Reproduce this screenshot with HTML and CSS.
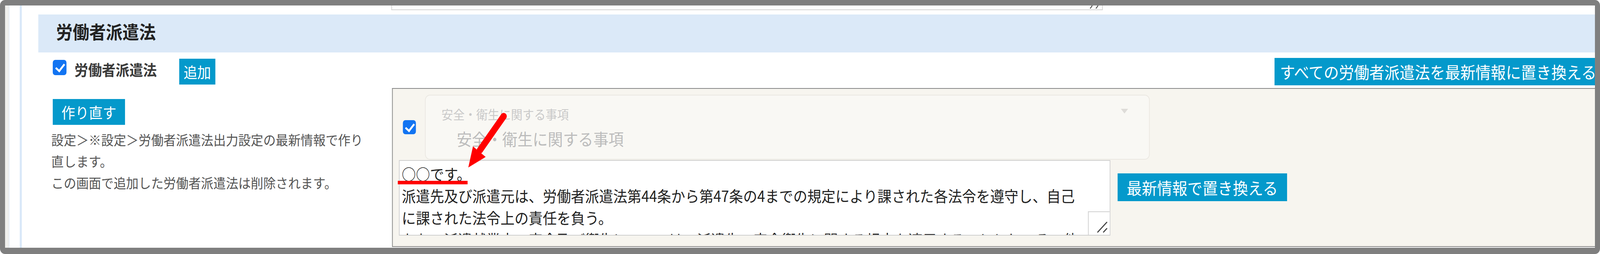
FILE: index.html
```html
<!DOCTYPE html>
<html lang="ja">
<head>
<meta charset="utf-8">
<title>労働者派遣法</title>
<link rel="stylesheet" href="styles.css">
</head>
<body>
<div class="page">
  <div class="frame">
    <div class="gutter"></div>
    <main class="main">
      <div class="prev-strip">
        <div class="prev-textarea">
          <svg class="grip" viewBox="0 0 30 8" aria-hidden="true">
            <line x1="3" y1="8" x2="9" y2="0" stroke="#555" stroke-width="2.5"/>
            <line x1="19" y1="8" x2="25" y2="0" stroke="#555" stroke-width="2.5"/>
          </svg>
        </div>
      </div>
      <section class="section">
        <h2 class="section-title">労働者派遣法</h2>
        <div class="row-top">
          <label class="check-label">
            <input type="checkbox" class="check" checked>
            <span class="check-text">労働者派遣法</span>
          </label>
          <button class="btn btn-add" type="button">追加</button>
          <div class="all-wrap">
            <button class="btn btn-all" type="button">すべての労働者派遣法を最新情報に置き換える</button>
          </div>
        </div>
        <div class="row-main">
          <div class="left-col">
            <button class="btn btn-rebuild" type="button">作り直す</button>
            <p class="note">設定＞※設定＞労働者派遣法出力設定の最新情報で作り直します。<br>この画面で追加した労働者派遣法は削除されます。</p>
          </div>
          <div class="panel">
            <div class="panel-row">
              <input type="checkbox" class="check check-item" checked>
              <div class="select">
                <div class="select-text">
                  <span class="select-label">安全・衛生に関する事項</span>
                  <span class="select-value">安全・衛生に関する事項</span>
                </div>
                <span class="select-arrow"></span>
              </div>
            </div>
            <div class="panel-row2">
              <div class="textarea">
                <div class="ta-line">○○です。</div>
                <div class="ta-line">派遣先及び派遣元は、労働者派遣法第44条から第47条の4までの規定により課された各法令を遵守し、自己に課された法令上の責任を負う。</div>
                <div class="ta-line">なお、派遣就業中の安全及び衛生については、派遣先の安全衛生に関する規定を適用することとし、その他については派遣元の安全衛生に関する規定を適用する。</div>
                <div class="corner">
                  <svg viewBox="0 0 58 58" aria-hidden="true">
                    <line x1="25" y1="51" x2="50" y2="26" stroke="#444" stroke-width="3" stroke-linecap="round"/>
                    <line x1="41" y1="51" x2="50" y2="42" stroke="#444" stroke-width="3" stroke-linecap="round"/>
                  </svg>
                </div>
              </div>
              <button class="btn btn-replace" type="button">最新情報で置き換える</button>
            </div>
          </div>
        </div>
      </section>
    </main>
  </div>
  <svg class="annot" viewBox="0 0 4428 649" aria-hidden="true">
    <rect x="1101" y="462" width="193" height="9" fill="#ff0000"/>
    <line x1="1394" y1="297" x2="1328" y2="384" stroke="#ff0000" stroke-width="17" stroke-linecap="round"/>
    <polygon points="1309,374 1344,401 1296,428" fill="#ff0000"/>
  </svg>
</div>
</body>
</html>
```

FILE: styles.css
```css
* { box-sizing: border-box; }
html, body { margin: 0; padding: 0; }
body {
  position: relative;
  overflow: hidden;
  height: 649px;
  background: #fff;
  font-family: "Noto Sans CJK JP", "Noto Sans", sans-serif;
}

.page {
  position: relative;
  width: 4428px;
  height: 649px;
  transform-origin: 0 0;
}
@media (max-width: 4427px) {
  .page { transform: scaleX(0.92502); }
}

.frame {
  width: 4428px;
  height: 649px;
  border: 14px solid #7f7f7f;
  border-bottom-width: 16px;
  border-radius: 14px;
  display: flex;
  overflow: hidden;
  background: #fff;
}

.gutter {
  flex: 0 0 46px;
  background: #fff;
  border-left: 11px solid #efefed;
  border-right: 5px double #c9def6;
  box-shadow: inset 1px 0 0 #cfe1f6;
}

.main {
  flex: 1 1 auto;
  min-width: 0;
  padding-left: 46px;
  display: flex;
  flex-direction: column;
}

.prev-strip { flex: 0 0 23px; height: 23px; }
.prev-textarea {
  margin-left: 977px;
  width: 1969px;
  height: 12px;
  border: 2px solid #d3d3d3;
  border-top: 0;
  display: flex;
  justify-content: flex-end;
  align-items: flex-end;
}
.grip { width: 30px; height: 8px; margin: 0 6px 2px 0; }

.section { display: flex; flex-direction: column; flex: 1; }

.section-title {
  margin: 0;
  height: 97px;
  flex: 0 0 97px;
  padding: 0 0 11px 49px;
  display: flex;
  align-items: center;
  background: #dbe9f8;
  color: #222;
  font-size: 46px;
  font-weight: 700;
  line-height: 1.2;
}

.row-top {
  height: 91px;
  flex: 0 0 91px;
  display: flex;
  align-items: flex-start;
  padding-left: 36px;
}
.check-label { display: flex; align-items: flex-start; }

.check {
  -webkit-appearance: none;
  appearance: none;
  position: relative;
  flex: 0 0 auto;
  width: 38px;
  height: 39px;
  margin: 19px 22px 0 4px;
  border-radius: 7px;
  background: #1274f2;
}
.check::after {
  content: "";
  position: absolute;
  left: 13px;
  top: 5px;
  width: 10px;
  height: 20px;
  border-right: 5px solid #fff;
  border-bottom: 5px solid #fff;
  transform: rotate(40deg);
}

.check-text {
  margin-top: 20px;
  font-size: 38px;
  line-height: 46px;
  font-weight: 700;
  color: #3a3a3a;
}

.btn {
  border: 0;
  border-radius: 0;
  background: #0499cb;
  color: #fff;
  font-family: inherit;
  font-weight: 400;
  white-space: nowrap;
  padding: 0;
  cursor: pointer;
}
.btn-add {
  margin: 16px 0 0 62px;
  width: 100px;
  height: 66px;
  font-size: 38px;
  line-height: 66px;
}
.all-wrap {
  margin: 14px 0 0 auto;
  width: 887px;
  flex: 0 0 887px;
  overflow: hidden;
}
.btn-all {
  display: block;
  height: 70px;
  padding: 0 15px;
  font-size: 42px;
  line-height: 70px;
}

.row-main {
  flex: 1;
  display: flex;
  align-items: flex-start;
  padding-left: 36px;
}
.left-col { flex: 0 0 943px; }
.btn-rebuild {
  display: block;
  margin: 28px 0 0 4px;
  width: 200px;
  height: 66px;
  font-size: 38px;
  line-height: 66px;
}
.note {
  margin: 10px 0 0;
  width: 868px;
  font-size: 34.5px;
  line-height: 55px;
  color: #555;
}

.panel {
  flex: 1;
  height: 406px;
  border: 2px solid #878787;
  border-right: 0;
  background: #f7f5ef;
}
.panel-row {
  display: flex;
  align-items: center;
  padding: 15px 0 0 28px;
}
.check-item {
  width: 36px;
  height: 36px;
  margin: 0 25px 0 0;
}
.check-item::after { left: 12px; top: 4px; }
.select {
  flex: 0 0 2006px;
  width: 2006px;
  height: 166px;
  border: 2px solid #ebe8e2;
  border-radius: 14px;
  background: #f9f8f4;
  display: flex;
  align-items: flex-start;
}
.select-text {
  flex: 1;
  display: flex;
  flex-direction: column;
  align-items: flex-start;
  padding: 27px 0 0 44px;
}
.select-label { font-size: 32px; line-height: 40px; color: #c9c9c9; }
.select-value { margin: 18px 0 0 42px; font-size: 42px; line-height: 50px; color: #bcbcbc; }
.select-arrow {
  width: 0;
  height: 0;
  border-left: 10px solid transparent;
  border-right: 10px solid transparent;
  border-top: 12px solid #dedcd8;
  margin: 34px 58px 0 0;
}

.panel-row2 {
  display: flex;
  align-items: flex-start;
  padding-left: 17px;
  margin-top: 1px;
}
.textarea {
  position: relative;
  flex: 0 0 1969px;
  width: 1969px;
  height: 193px;
  border: 2px solid #cfcfcf;
  background: #fff;
  padding: 4px 58px 0 6px;
  overflow: hidden;
  font-size: 39px;
  line-height: 56px;
  color: #222;
}
.corner {
  position: absolute;
  right: 0;
  bottom: 0;
  width: 60px;
  height: 60px;
  border-left: 2px solid #d0d0d0;
  border-top: 2px solid #d0d0d0;
  background: #fff;
}
.corner svg { display: block; width: 58px; height: 58px; }
.btn-replace {
  margin: 34px 0 0 20px;
  height: 71px;
  padding: 0 25px;
  font-size: 42px;
  line-height: 71px;
  flex: 0 0 auto;
}

.annot {
  position: absolute;
  left: 0;
  top: 0;
  width: 4428px;
  height: 649px;
  pointer-events: none;
}
```
